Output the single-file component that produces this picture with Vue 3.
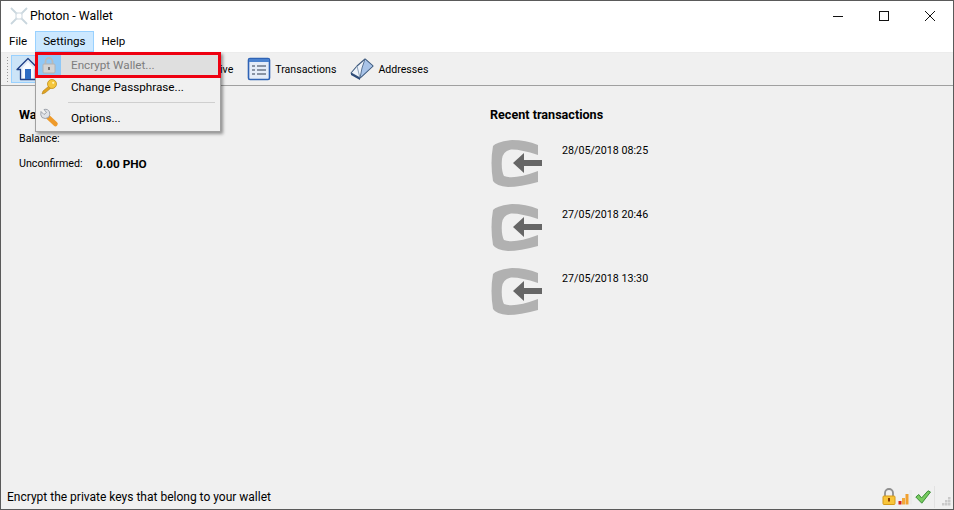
<script setup>
const txs = ['28/05/2018 08:25', '27/05/2018 20:46', '27/05/2018 13:30']
</script>

<template>
  <div class="window">
    <header class="titlebar">
      <svg class="app-icon" width="20" height="20" viewBox="0 0 20 20" fill="none">
        <path d="M2 2 L8 8 M18 2 L12 8 M2 18 L8 12 M18 18 L12 12" stroke="#c9d6de" stroke-width="1.8" />
        <rect x="7" y="7" width="6" height="6" stroke="#d5dee4" stroke-width="1.2" />
      </svg>
      <span class="title-text">Photon - Wallet</span>
      <div class="window-controls">
        <span class="wc"><svg width="12" height="12" viewBox="0 0 12 12"><path d="M1 6.5H11" stroke="#111" fill="none" /></svg></span>
        <span class="wc"><svg width="12" height="12" viewBox="0 0 12 12"><rect x="1.5" y="1.5" width="9" height="9" stroke="#111" fill="none" /></svg></span>
        <span class="wc"><svg width="12" height="12" viewBox="0 0 12 12"><path d="M1 1L11 11M11 1L1 11" stroke="#111" fill="none" /></svg></span>
      </div>
    </header>

    <nav class="menubar">
      <span class="menu-item">File</span>
      <span class="menu-item active">Settings</span>
      <span class="menu-item">Help</span>
    </nav>

    <div class="toolbar">
      <div class="grip"></div>
      <div class="tool checked">
        <svg width="24" height="24" viewBox="0 0 24 24">
          <path d="M12 1.5 L1 12.5 H4.5 V22.5 H19.5 V12.5 H23 Z" fill="#dfe9f6" stroke="#1f3f86" stroke-width="1.3" stroke-linejoin="round" />
          <path d="M12 5 L6.5 11 V21 H17.5 V11 Z" fill="#f8fbff" />
          <rect x="9" y="12" width="6" height="10" fill="#2c6cc4" />
        </svg>
        <span class="under-menu">Overview</span>
      </div>
      <div class="tool"><span class="hidden-icon"></span><span class="under-menu">Send</span></div>
      <div class="tool"><span class="hidden-icon"></span><span>Receive</span></div>
      <div class="tool">
        <svg width="24" height="24" viewBox="0 0 24 24">
          <rect x="1.5" y="1.5" width="21" height="21" rx="1.5" fill="#e4ecf8" stroke="#2f63b5" stroke-width="1.6" />
          <rect x="2" y="2" width="20" height="3" fill="#4b82cf" />
          <path d="M5 9H8M10 9H19M5 13H8M10 13H19M5 17H8M10 17H19" stroke="#6b7686" stroke-width="1.7" />
        </svg>
        <span>Transactions</span>
      </div>
      <div class="tool">
        <svg width="24" height="24" viewBox="0 0 24 24">
          <path d="M1 16 L10 21 L23 9 L15 2 L7 9 Z" fill="#eef3fa" stroke="#3f5a7d" stroke-width="1.1" stroke-linejoin="round" />
          <path d="M7 9 L10 21" stroke="#8fa3bb" stroke-width="1" />
          <path d="M15 2 L23 9 L10 21 L12 11 Z" fill="#a8c3e8" stroke="#3f5a7d" stroke-width=".8" stroke-linejoin="round" />
          <path d="M1 16 L10 21 L10 23 L1 18 Z" fill="#2c4a78" />
        </svg>
        <span>Addresses</span>
      </div>
    </div>

    <main class="content">
      <section class="wallet">
        <h2 class="heading">Wallet</h2>
        <div class="row balance"><span class="label">Balance:</span></div>
        <div class="row"><span class="label">Unconfirmed:</span><b>0.00 PHO</b></div>
      </section>
      <section class="recent">
        <h2 class="heading">Recent transactions</h2>
        <ul class="tx-list">
          <li v-for="t in txs" :key="t" class="tx">
            <svg width="54" height="50" viewBox="0 0 54 50">
              <path d="M3 7 Q 6 3 22 1 Q 36 1 48 6 V16 Q 30 10 21 10.5 Q 13 12 12 20 Q 11 31 14 37 Q 24 41 48 32 V43 Q 30 48 18 48 Q 6 47 3 42 Q 0 24 3 7 Z" fill="#b1b1b1" />
              <path d="M23 24 L34 14 V21 H52 V27 H34 V34 Z" fill="#666" />
            </svg>
            <span class="tx-date">{{ t }}</span>
          </li>
        </ul>
      </section>
    </main>

    <footer class="statusbar">
      <span class="status-text">Encrypt the private keys that belong to your wallet</span>
      <div class="status-icons">
        <svg width="14" height="17" viewBox="0 0 14 17">
          <path d="M3 8 V5 a4 4 0 0 1 8 0 V8" fill="none" stroke="#8f8f8f" stroke-width="1.8" />
          <rect x="1" y="8" width="12" height="8.5" rx="1" fill="#f8c53a" stroke="#d69a18" />
          <rect x="6" y="10" width="2" height="3.5" fill="#8a3d00" />
        </svg>
        <svg width="15" height="16" viewBox="0 0 15 16">
          <rect x="0.5" y="12" width="3" height="3.5" fill="#d4261c" />
          <rect x="4" y="9" width="3" height="6.5" fill="#f2a93a" />
          <rect x="7.5" y="5" width="3" height="10.5" fill="#f0a030" />
          <rect x="11" y="1" width="3" height="14.5" fill="#ebebeb" />
        </svg>
        <svg width="16" height="14" viewBox="0 0 16 14">
          <path d="M0.8 7 L3.8 4.5 L6.5 8 L13 0.8 L15.5 2 L6.8 13.2 Z" fill="#78cb60" stroke="#3d8f38" stroke-width="1" stroke-linejoin="round" />
        </svg>
        <span class="status-sep"></span>
        <svg class="size-grip" width="9" height="9" viewBox="0 0 9 9">
          <path d="M6 0h2.500v2.500H6zM3 3h2.500v2.500H3zM6 3h2.500v2.500H6zM0 6h2.500v2.500H0zM3 6h2.500v2.500H3zM6 6h2.500v2.500H6z" fill="#cacaca" />
        </svg>
      </div>
    </footer>

    <div class="dropdown">
      <div class="dd-item disabled">
        <span class="dd-icon selected-icon">
          <svg width="16" height="18" viewBox="0 0 16 18">
            <path d="M4.500 8 V5.500 a3.500 3.500 0 0 1 7 0 V8" fill="none" stroke="#b9b9b9" stroke-width="1.800" />
            <rect x="2" y="8" width="12" height="9" rx="1" fill="#d4d4d4" stroke="#b2b2b2" />
            <rect x="7" y="11" width="2" height="3" fill="#777" />
          </svg>
        </span>
        <span>Encrypt Wallet...</span>
      </div>
      <div class="dd-item">
        <span class="dd-icon">
          <svg width="18" height="18" viewBox="0 0 18 18">
            <path d="M2 16 L3 13 L9 8 L11 10 L5 15 Z" fill="#e0a321" stroke="#b47f12" stroke-width=".6" />
            <circle cx="12" cy="6" r="4.500" fill="#f5c63c" stroke="#c28d18" stroke-width=".8" />
            <circle cx="13.200" cy="4.800" r="1.100" fill="#fff3b8" />
          </svg>
        </span>
        <span>Change Passphrase...</span>
      </div>
      <div class="dd-sep"></div>
      <div class="dd-item">
        <span class="dd-icon">
          <svg width="20" height="20" viewBox="0 0 20 20">
            <path d="M9 9 L16.500 16" stroke="#ee9a2a" stroke-width="4.500" stroke-linecap="round" />
            <path d="M2 3.500 L5 6.500 L7.500 4.500 L5 1.500 Q9 0.500 10.500 4 Q11.500 7 9.500 9.500 Q6 11.500 3 9.500 Q1 7 2 3.500 Z" fill="#dfe2e7" stroke="#8b929c" stroke-width=".8" />
          </svg>
        </span>
        <span>Options...</span>
      </div>
      <div class="red-box"></div>
    </div>
  </div>
</template>

<style>
html, body { margin: 0; padding: 0; background: #f0f0f0; }
</style>

<style scoped>
.window {
  position: relative;
  width: 954px;
  height: 510px;
  box-sizing: border-box;
  border: 1px solid #5a5a5a;
  display: flex;
  flex-direction: column;
  font-family: Roboto, "Noto Sans", sans-serif;
  font-size: 12px;
  color: #000;
  background: #f0f0f0;
  overflow: hidden;
}
.titlebar {
  height: 30px;
  box-sizing: border-box;
  padding: 0 0 1px 8px;
  background: #fff;
  display: flex;
  align-items: center;
  flex: none;
}
.app-icon { margin-right: 1px; }
.title-text { font-size: 12.3px; }
.window-controls { margin-left: auto; display: flex; }
.wc {
  width: 46px;
  height: 29px;
  display: flex;
  align-items: center;
  justify-content: center;
}
.menubar {
  height: 22px;
  box-sizing: border-box;
  background: #fff;
  display: flex;
  flex: none;
  font-size: 11.6px;
  border-bottom: 1px solid #ececec;
}
.menu-item {
  padding: 0 7px 1px;
  display: flex;
  align-items: center;
  box-sizing: border-box;
  height: 21px;
  border: 1px solid transparent;
}
.menu-item.active {
  background: #cce8ff;
  border-color: #99d1ff;
}
.toolbar {
  height: 32px;
  flex: none;
  display: flex;
  align-items: center;
  padding-left: 5px;
  border-bottom: 1px solid #a0a0a0;
  background: #f0f0f0;
  font-size: 10.6px;
}
.grip {
  width: 3px;
  height: 27px;
  margin-right: 2px;
  background-image: radial-gradient(circle, #9a9a9a 0.9px, transparent 1px);
  background-size: 3px 3px;
}
.tool {
  display: flex;
  align-items: center;
  gap: 4px;
  height: 28px;
  padding: 0 3px;
  margin-right: 8px;
  box-sizing: border-box;
}
.tool.checked {
  background: #cce4f7;
  border: 1px solid #99d1ff;
  padding: 0 4px;
}
.under-menu { visibility: hidden; }
.hidden-icon { width: 24px; height: 24px; }
.content {
  flex: 1;
  display: flex;
  padding: 21px 0 0 18px;
  min-height: 0;
  font-size: 10.7px;
}
.wallet { width: 471px; flex: none; }
.heading {
  font-size: 12.6px;
  font-weight: 700;
  margin: 0;
  line-height: 16px;
}
.row {
  display: flex;
  line-height: 16px;
  margin-top: 9px;
}
.row.balance { margin-top: 8px; }
.row b { font-size: 11.8px; }
.label { width: 77px; flex: none; }
.tx-list { list-style: none; margin: 16px 0 0; padding: 0; }
.tx {
  display: flex;
  height: 64px;
  align-items: flex-start;
}
.tx svg { flex: none; margin-right: 18px; }
.tx-date { line-height: 16px; margin-top: 4px; }
.statusbar {
  height: 23px;
  flex: none;
  display: flex;
  align-items: center;
  padding-left: 6px;
  margin-bottom: 1px;
}
.status-icons {
  margin-left: auto;
  display: flex;
  align-items: center;
  gap: 2px;
  margin-right: 2px;
}
.status-sep {
  width: 1px;
  height: 22px;
  background: #e2e2e2;
  margin: 0 5px 0 1px;
}
.size-grip { margin: 10px 0 0 0; }
.dropdown {
  position: absolute;
  left: 34px;
  top: 51px;
  width: 186px;
  height: 80px;
  box-sizing: border-box;
  background: #f0f0f0;
  border: 1px solid #a0a0a0;
  box-shadow: 2px 2px 3px rgba(0,0,0,.4);
  padding: 1px;
  font-size: 11.7px;
}
.dd-item {
  display: flex;
  align-items: center;
  height: 22px;
  position: relative;
}
.dd-item.disabled { background: #dfdfdf; color: #7d7d7d; }
.dd-icon {
  width: 24px;
  height: 22px;
  margin-right: 10px;
  flex: none;
  display: flex;
  align-items: center;
  justify-content: center;
}
.selected-icon { background: #90c8f6; }
.dd-sep {
  height: 1px;
  background: #cfcfcf;
  margin: 4px 4px 4px 31px;
}
.red-box {
  position: absolute;
  left: -1px;
  top: -1px;
  width: 186px;
  height: 26px;
  box-sizing: border-box;
  border: 3px solid #ee0010;
  pointer-events: none;
}
</style>
